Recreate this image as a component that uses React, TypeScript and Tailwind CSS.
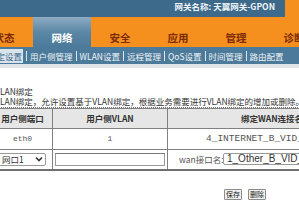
import React from 'react'

const cjk = { fontFamily: '"Noto Sans CJK SC", "Noto Sans", sans-serif' }
const mono = { fontFamily: '"Liberation Mono", "Noto Sans CJK SC", monospace' }
const arial = { fontFamily: '"Liberation Sans", Arial, sans-serif' }

const tabs = ['状态', '网络', '安全', '应用', '管理', '诊断']
const subItems = ['用户侧管理', 'WLAN设置', '远程管理', 'QoS设置', '时间管理', '路由配置']

function Sep() {
  return <span className="mx-[3px] h-[10px] w-px bg-[#dbe5ec]" />
}

export default function App() {
  return (
    <div className="w-[299px] h-[200px] overflow-hidden bg-white" style={cjk}>
      {/* top band */}
      <div className="flex h-[17px] bg-[#3d6a8a]">
        <div className="flex flex-1 justify-end pr-[10px] pt-[1px]">
          <span className="text-[8.5px] leading-[10px] font-bold text-[#eef3f7] whitespace-nowrap">
            网关名称: 天翼网关-GPON
          </span>
        </div>
        <div className="w-[14px] bg-[#f5901f]" />
      </div>

      {/* main tabs */}
      <div className="-ml-[25px] flex h-[30px] bg-[#f5901f]">
        {tabs.map((t) => {
          const active = t === '网络'
          return (
            <div
              key={t}
              className={
                active
                  ? 'w-[58px] shrink-0 pt-[16px] text-center text-[10.5px] leading-[10px] font-bold text-white bg-gradient-to-b from-[#8eacc4] via-[#5b87a6] to-[#4c7a9a]'
                  : 'w-[58px] shrink-0 pt-[16px] text-center text-[10.5px] leading-[10px] font-bold text-[#7e2c06]'
              }
            >
              {t}
            </div>
          )
        })}
      </div>

      {/* sub menu */}
      <div className="flex h-[17px] items-center bg-[#4c7a9a] text-[8.5px] leading-[10px] text-[#eef3f7] whitespace-nowrap">
        <span className="-ml-[14px] shrink-0 bg-[#d9e3eb] py-[2px] pl-[2px] pr-[1px] text-[#3d6a8a]">绑定设置</span>
        {subItems.map((s) => (
          <React.Fragment key={s}>
            <Sep />
            <span className="shrink-0">{s}</span>
          </React.Fragment>
        ))}
      </div>
      <div className="h-[4px] bg-[#dfe4e8]" />

      {/* description */}
      <div className="mt-[18px] -ml-[5px] text-[8.5px] leading-[10px] text-[#333] whitespace-nowrap">
        <div>VLAN绑定</div>
        <div>
          <span className="border-b border-dotted border-[#777]">
            VLAN绑定，允许设置基于VLAN绑定，根据业务需要进行VLAN绑定的增加或删除。
          </span>
        </div>
      </div>

      {/* table */}
      <table className="mt-[2px] -ml-[8px] border-collapse table-fixed w-[415px] text-[#333]">
        <colgroup>
          <col className="w-[60px]" />
          <col className="w-[115px]" />
          <col className="w-[240px]" />
        </colgroup>
        <thead>
          <tr className="h-[20px] bg-[#e6e6e6] text-[8.5px] font-bold">
            <th className="border border-[#808080] text-center font-bold">用户侧端口</th>
            <th className="border border-[#808080] text-center font-bold">用户侧VLAN</th>
            <th className="border border-[#808080] pl-[73px] text-left font-bold whitespace-nowrap">绑定WAN连接名称</th>
          </tr>
        </thead>
        <tbody>
          <tr className="h-[21px]">
            <td className="border border-[#808080] text-center text-[8px] text-[#555]" style={mono}>eth0</td>
            <td className="border border-[#808080] text-center text-[8px] text-[#555]" style={mono}>1</td>
            <td className="border border-[#808080] pl-[38px] text-[9.5px] text-[#555] whitespace-nowrap" style={mono}>4_INTERNET_B_VID_45</td>
          </tr>
          <tr className="h-[20px] border-b-2 border-[#707070]">
            <td className="border border-[#808080] pl-[5px] pr-[6px]">
              <div className="flex h-[13px] items-center justify-between rounded-[2px] border border-[#999] bg-white pl-[3px] pr-[2px] text-[8.5px] leading-[10px]">
                <span>网口1</span>
                <svg width="8" height="6" viewBox="0 0 8 6">
                  <path d="M1 1.5 L4 4.5 L7 1.5" stroke="#333" strokeWidth="1.6" fill="none" />
                </svg>
              </div>
            </td>
            <td className="border border-[#808080] px-[2px]">
              <div className="h-[13px] border border-[#9a9a9a] border-t-[#777] bg-white" />
            </td>
            <td className="border border-[#808080] pl-[11px]">
              <div className="flex items-center whitespace-nowrap">
                <span className="text-[8.5px] leading-[10px] w-[44px] text-[#555]">wan接口名:</span>
                <div className="flex h-[12px] items-center rounded-[2px] border border-[#999] bg-white pl-[3px] text-[10px] leading-[10px] w-[170px]" style={arial}>
                  1_Other_B_VID_
                </div>
              </div>
            </td>
          </tr>
        </tbody>
      </table>

      {/* buttons */}
      <div className="mt-[18px] ml-[224px] flex gap-[6px]">
        <button className="h-[11px] w-[18px] rounded-[1px] border border-[#8c8c8c] bg-[#efefef] text-[7px] leading-[9px] text-[#222]">保存</button>
        <button className="h-[11px] w-[18px] rounded-[1px] border border-[#8c8c8c] bg-[#efefef] text-[7px] leading-[9px] text-[#222]">删除</button>
      </div>
    </div>
  )
}
